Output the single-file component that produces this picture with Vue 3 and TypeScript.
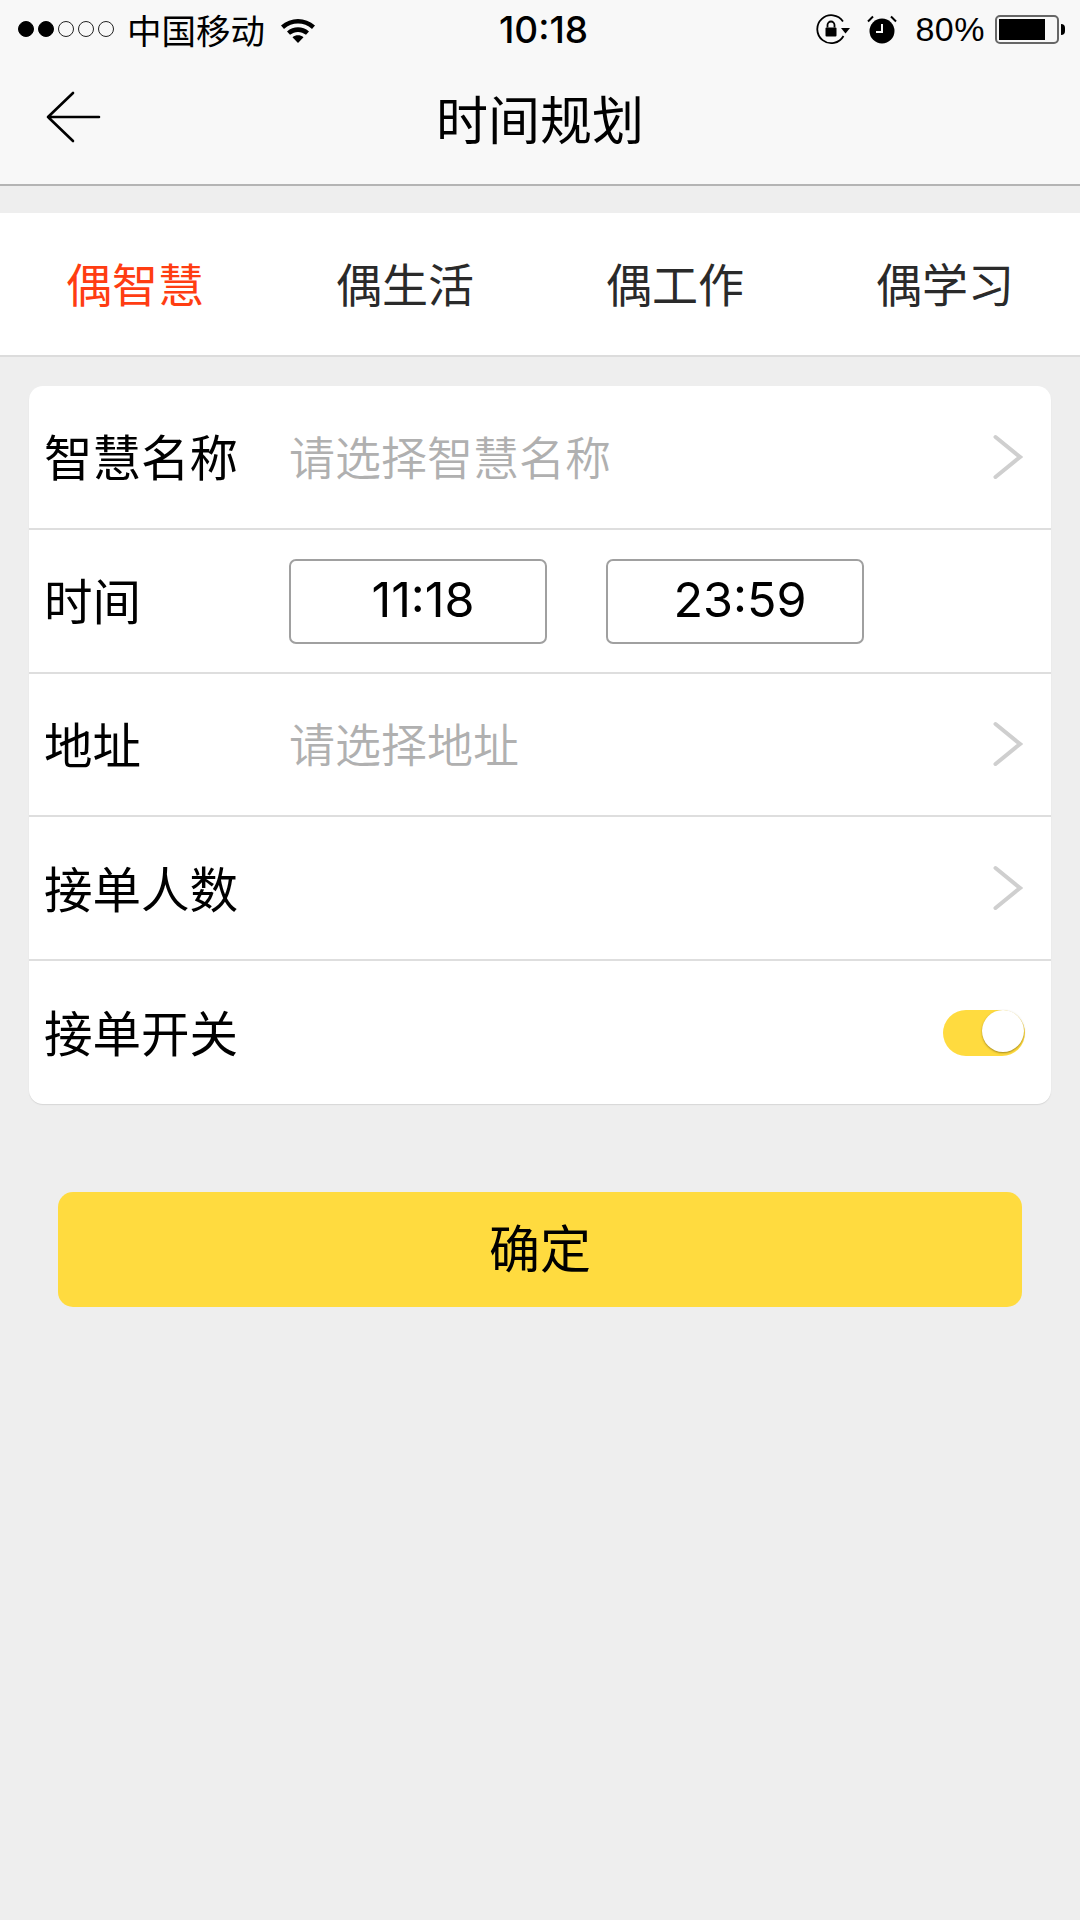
<script setup lang="ts">
import { ref } from 'vue';

interface FormRow {
  id: string;
  label: string;
  placeholder?: string;
  arrow?: boolean;
}

const tabs = ['偶智慧', '偶生活', '偶工作', '偶学习'];
const activeTab = ref(0);

const rows: FormRow[] = [
  { id: 'name', label: '智慧名称', placeholder: '请选择智慧名称', arrow: true },
  { id: 'time', label: '时间' },
  { id: 'address', label: '地址', placeholder: '请选择地址', arrow: true },
  { id: 'count', label: '接单人数', arrow: true },
  { id: 'switch', label: '接单开关' }
];

const times = ['11:18', '23:59'];
</script>

<template>
  <div class="page">
    <header class="top">
      <div class="status">
        <div class="status-left">
          <span class="dots">
            <i class="dot on"></i><i class="dot on"></i><i class="dot"></i><i class="dot"></i><i class="dot"></i>
          </span>
          <span class="carrier">中国移动</span>
          <svg class="wifi" width="36" height="27" viewBox="0 0 36 27">
            <path d="M1 9.500C10.500 .8 25.500 .8 35 9.500l-3 3.400C24 5.800 12 5.800 4 12.900z" fill="#000" />
            <path d="M7 15.500c6.500-5.600 15.500-5.600 22 0l-3 3.300c-4.800-3.900-11.200-3.900-16 0z" fill="#000" />
            <path d="M12.500 21.200c3.300-2.500 7.700-2.500 11 0L18 27z" fill="#000" />
          </svg>
        </div>
        <div class="clock">10:18</div>
        <div class="status-right">
          <svg class="lock" width="35" height="32" viewBox="0 0 35 32">
            <path d="M28.500 23A14 14 0 1 1 28 8.500" fill="none" stroke="#000" stroke-width="1.800" />
            <path d="M26 15h9l-4.500 5.500z" fill="#000" />
            <rect x="10.500" y="14.500" width="11" height="9" rx="1" fill="#000" />
            <path d="M12.500 14.500v-2.500a3.500 3.500 0 0 1 7 0v2.500" fill="none" stroke="#000" stroke-width="1.800" />
          </svg>
          <svg class="alarm" width="30" height="29" viewBox="0 0 30 29">
            <circle cx="15" cy="16" r="12.500" fill="#000" />
            <path d="M15 9v8h-6" fill="none" stroke="#f8f8f8" stroke-width="2" />
            <path d="M1 6.500 6 1.500M29 6.500 24 1.500" stroke="#000" stroke-width="2" />
          </svg>
          <span class="percent">80%</span>
          <span class="battery"><i class="level"></i></span>
          <i class="nub"></i>
        </div>
      </div>
      <div class="nav">
        <svg class="back" width="56" height="52" viewBox="0 0 56 52">
          <path d="M28 2 3 26l25 24M3 26h51" fill="none" stroke="#000" stroke-width="2.600" stroke-linecap="round" stroke-linejoin="round" />
        </svg>
        <h1 class="title">时间规划</h1>
      </div>
    </header>

    <nav class="tabs">
      <div
        v-for="(tab, i) in tabs"
        :key="tab"
        :class="['tab', { active: i === activeTab }]"
        @click="activeTab = i"
      >
        {{ tab }}
      </div>
    </nav>

    <section class="card">
      <div v-for="row in rows" :key="row.id" class="row">
        <span class="label">{{ row.label }}</span>

        <span v-if="row.placeholder" class="placeholder">{{ row.placeholder }}</span>

        <div v-if="row.id === 'time'" class="times">
          <div v-for="t in times" :key="t" class="time-box">{{ t }}</div>
        </div>

        <svg v-if="row.arrow" class="arrow" width="30" height="46" viewBox="0 0 30 46">
          <path d="M2.500 3 27 23 2.500 43" fill="none" stroke="#cfcfcf" stroke-width="4" stroke-linecap="round" stroke-linejoin="miter" />
        </svg>

        <div v-if="row.id === 'switch'" class="switch">
          <i class="knob"></i>
        </div>
      </div>
    </section>

    <button class="confirm" type="button"><span>确定</span></button>
  </div>
</template>

<style>
html,
body {
  margin: 0;
  background: #eeeeee;
}
</style>

<style scoped>
.page {
  width: 1080px;
  min-height: 1920px;
  background: #eeeeee;
  font-family: "Noto Sans CJK SC", "Liberation Sans", sans-serif;
  color: #000;
}

.top {
  height: 186px;
  box-sizing: border-box;
  background: #f8f8f8;
  border-bottom: 2px solid #b4b4b4;
}

.status {
  height: 58px;
  display: grid;
  grid-template-columns: 1fr auto 1fr;
  align-items: center;
  padding: 0 15px 0 18px;
}

.status-left,
.status-right {
  display: flex;
  align-items: center;
}

.status-right {
  justify-content: flex-end;
}

.dots {
  display: flex;
  gap: 4px;
}

.dot {
  width: 16px;
  height: 16px;
  box-sizing: border-box;
  border: 1.500px solid #222;
  border-radius: 50%;
}

.dot.on {
  background: #000;
  border-color: #000;
}

.carrier {
  font-size: 34.500px;
  line-height: 40px;
  margin-left: 13px;
}

.wifi {
  margin-left: 15px;
}

.clock {
  font-family: Inter, "Liberation Sans", sans-serif;
  font-size: 37px;
  font-weight: 500;
  margin-left: 4px;
}

.lock {
  margin-left: 2px;
  margin-right: 17px;
}

.alarm {
  margin-right: 18px;
}

.percent {
  font-family: "Liberation Sans", sans-serif;
  font-size: 34px;
  letter-spacing: 0.5px;
  margin-right: 10px;
}

.battery {
  width: 64px;
  height: 29px;
  box-sizing: border-box;
  border: 2px solid #666;
  border-radius: 5px;
  padding: 2px;
  display: flex;
}

.level {
  width: 46px;
  background: #000;
}

.nub {
  width: 4px;
  height: 11px;
  margin-left: 2px;
  background: #000;
  border-radius: 0 4px 4px 0;
}

.nav {
  height: 126px;
  position: relative;
  display: flex;
  align-items: center;
  justify-content: center;
}

.back {
  position: absolute;
  left: 45px;
  top: 33px;
}

.title {
  margin: 0 0 6px;
  font-size: 52px;
  font-weight: 400;
  line-height: 70px;
}

.tabs {
  margin-top: 27px;
  height: 144px;
  box-sizing: border-box;
  background: #fff;
  border-bottom: 2px solid #dcdcdc;
  display: grid;
  grid-template-columns: repeat(4, 1fr);
  align-items: center;
}

.tab {
  text-align: center;
  font-size: 46px;
  line-height: 60px;
  margin-bottom: 4px;
  color: #2a2a2a;
}

.tab.active {
  color: #ff3d12;
}

.card {
  margin: 29px 29px 0;
  background: #fff;
  border-radius: 14px;
  box-shadow: 0 1px 1px #d6d6d6;
  overflow: hidden;
}

.row {
  height: 143.800px;
  box-sizing: border-box;
  padding: 0 28px 0 15px;
  display: flex;
  align-items: center;
  border-bottom: 2px solid #dedede;
}

.row:last-child {
  height: 142.800px;
  border-bottom: 0;
}

.label {
  width: 245px;
  flex-shrink: 0;
  font-size: 48.500px;
  line-height: 60px;
  margin-bottom: 3px;
}

.placeholder {
  font-size: 46px;
  line-height: 60px;
  margin-bottom: 4px;
  color: #b0b0b0;
  font-weight: 350;
}

.arrow {
  margin-left: auto;
}

.times {
  display: flex;
  gap: 59px;
  padding-top: 1px;
}

.time-box {
  width: 258px;
  height: 85px;
  box-sizing: border-box;
  border: 2px solid #a0a0a0;
  border-radius: 7px;
  padding-left: 10px;
  font-family: Inter, "Liberation Sans", sans-serif;
  font-size: 48.500px;
  line-height: 77px;
  text-align: center;
}

.switch {
  margin-left: auto;
  margin-right: -2px;
  width: 82px;
  height: 46px;
  position: relative;
  background: #ffdb3f;
  border-radius: 23px;
}

.knob {
  position: absolute;
  right: 1px;
  top: 0;
  width: 42px;
  height: 42px;
  background: #fff;
  border-radius: 50%;
  box-shadow: 0 1px 2px rgba(90, 70, 0, 0.55);
}

.confirm {
  display: block;
  width: 964px;
  height: 115px;
  margin: 88px 0 0 58px;
  border: 0;
  border-radius: 15px;
  background: #ffdb3f;
  font-family: inherit;
  font-size: 51px;
  color: #000;
  padding: 0 0 6px;
}
</style>
